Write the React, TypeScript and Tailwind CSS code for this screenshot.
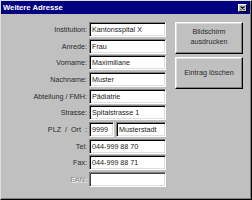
import React from "react"

type Field = {
  label: string
  value?: string
  disabled?: boolean
}

const fields: Field[] = [
  { label: "Institution:", value: "Kantonsspital X" },
  { label: "Anrede:", value: "Frau" },
  { label: "Vorname:", value: "Maximiliane" },
  { label: "Nachname:", value: "Muster" },
  { label: "Abteilung / FMH:", value: "Pädiatrie" },
  { label: "Strasse:", value: "Spitalstrasse 1" },
]

const fieldsAfter: Field[] = [
  { label: "Tel:", value: "044-999 88 70" },
  { label: "Fax:", value: "044-999 88 71" },
  { label: "EAN:", value: "", disabled: true },
]

const inputCls =
  "h-[15px] border border-t-[#808080] border-l-[#808080] border-r-white border-b-white bg-white pl-[2px] text-[#202020] leading-[13px] shadow-[inset_1px_1px_0_#000,inset_-1px_-1px_0_#dfdfdf] whitespace-nowrap overflow-hidden"

function Sunken({ value, disabled, className }: { value?: string; disabled?: boolean; className?: string }) {
  return (
    <div
      className={`${inputCls} ${disabled ? "bg-[#fbfbfb] shadow-[inset_1px_1px_0_#404040,inset_-1px_-1px_0_#dfdfdf]" : ""} ${className ?? ""}`}
    >
      {value}
    </div>
  )
}

function Label({ text, disabled }: { text: string; disabled?: boolean }) {
  return (
    <div
      className={`text-right whitespace-pre leading-[15px] ${
        disabled ? "text-[#8a8a8a] [text-shadow:1px_1px_0_#ffffff]" : "text-[#2a2a2a]"
      }`}
    >
      {text}
    </div>
  )
}

function Button({ children }: { children: React.ReactNode }) {
  return (
    <button
      type="button"
      className="flex w-[68px] items-center justify-center border border-t-white border-l-white border-r-black border-b-black bg-[#c0c0c0] text-center leading-[10px] text-[#2a2a2a] shadow-[inset_-1px_-1px_0_#808080,inset_1px_1px_0_#dfdfdf]"
    >
      {children}
    </button>
  )
}

export default function App() {
  return (
    <div
      className="flex h-[200px] w-[252px] flex-col border border-t-[#dfdfdf] border-l-[#dfdfdf] border-r-black border-b-black bg-[#c0c0c0] text-[7.2px] shadow-[inset_-1px_-1px_0_#808080]"
      style={{ fontFamily: '"Liberation Sans", Arial, sans-serif' }}
    >
      <div className="mr-[1px] flex h-[13px] items-center justify-between bg-[#000080] pl-[2px] pr-[3px]">
        <span className="text-[7.7px] font-bold text-white">Weitere Adresse</span>
        <span className="flex h-[8px] w-[9px] items-center justify-center border border-t-white border-l-white border-r-black border-b-black bg-[#c0c0c0]">
          <svg width="5" height="4" viewBox="0 0 5 4">
            <path d="M0.5 0.5 L4.5 3.5 M4.5 0.5 L0.5 3.5" stroke="#000" strokeWidth="1.1" />
          </svg>
        </span>
      </div>

      <div className="mt-[8px] flex gap-[9px]">
        <div className="grid grid-cols-[86px_77px] gap-x-[2px] gap-y-[1.67px]">
          {fields.map((f) => (
            <React.Fragment key={f.label}>
              <Label text={f.label} />
              <Sunken value={f.value} />
            </React.Fragment>
          ))}
          <Label text={"PLZ  /  Ort  :"} />
          <div className="flex gap-[2px]">
            <Sunken value="9999" className="w-[25px]" />
            <Sunken value="Musterstadt" className="flex-1" />
          </div>
          {fieldsAfter.map((f) => (
            <React.Fragment key={f.label}>
              <Label text={f.label} disabled={f.disabled} />
              <Sunken value={f.value} disabled={f.disabled} />
            </React.Fragment>
          ))}
        </div>

        <div className="flex flex-col gap-[3px]">
          <Button>
            <span className="h-[30px] pt-[4px]">
              Bildschirm
              <br />
              ausdrucken
            </span>
          </Button>
          <Button>
            <span className="flex h-[30px] items-center">Eintrag löschen</span>
          </Button>
        </div>
      </div>
    </div>
  )
}
